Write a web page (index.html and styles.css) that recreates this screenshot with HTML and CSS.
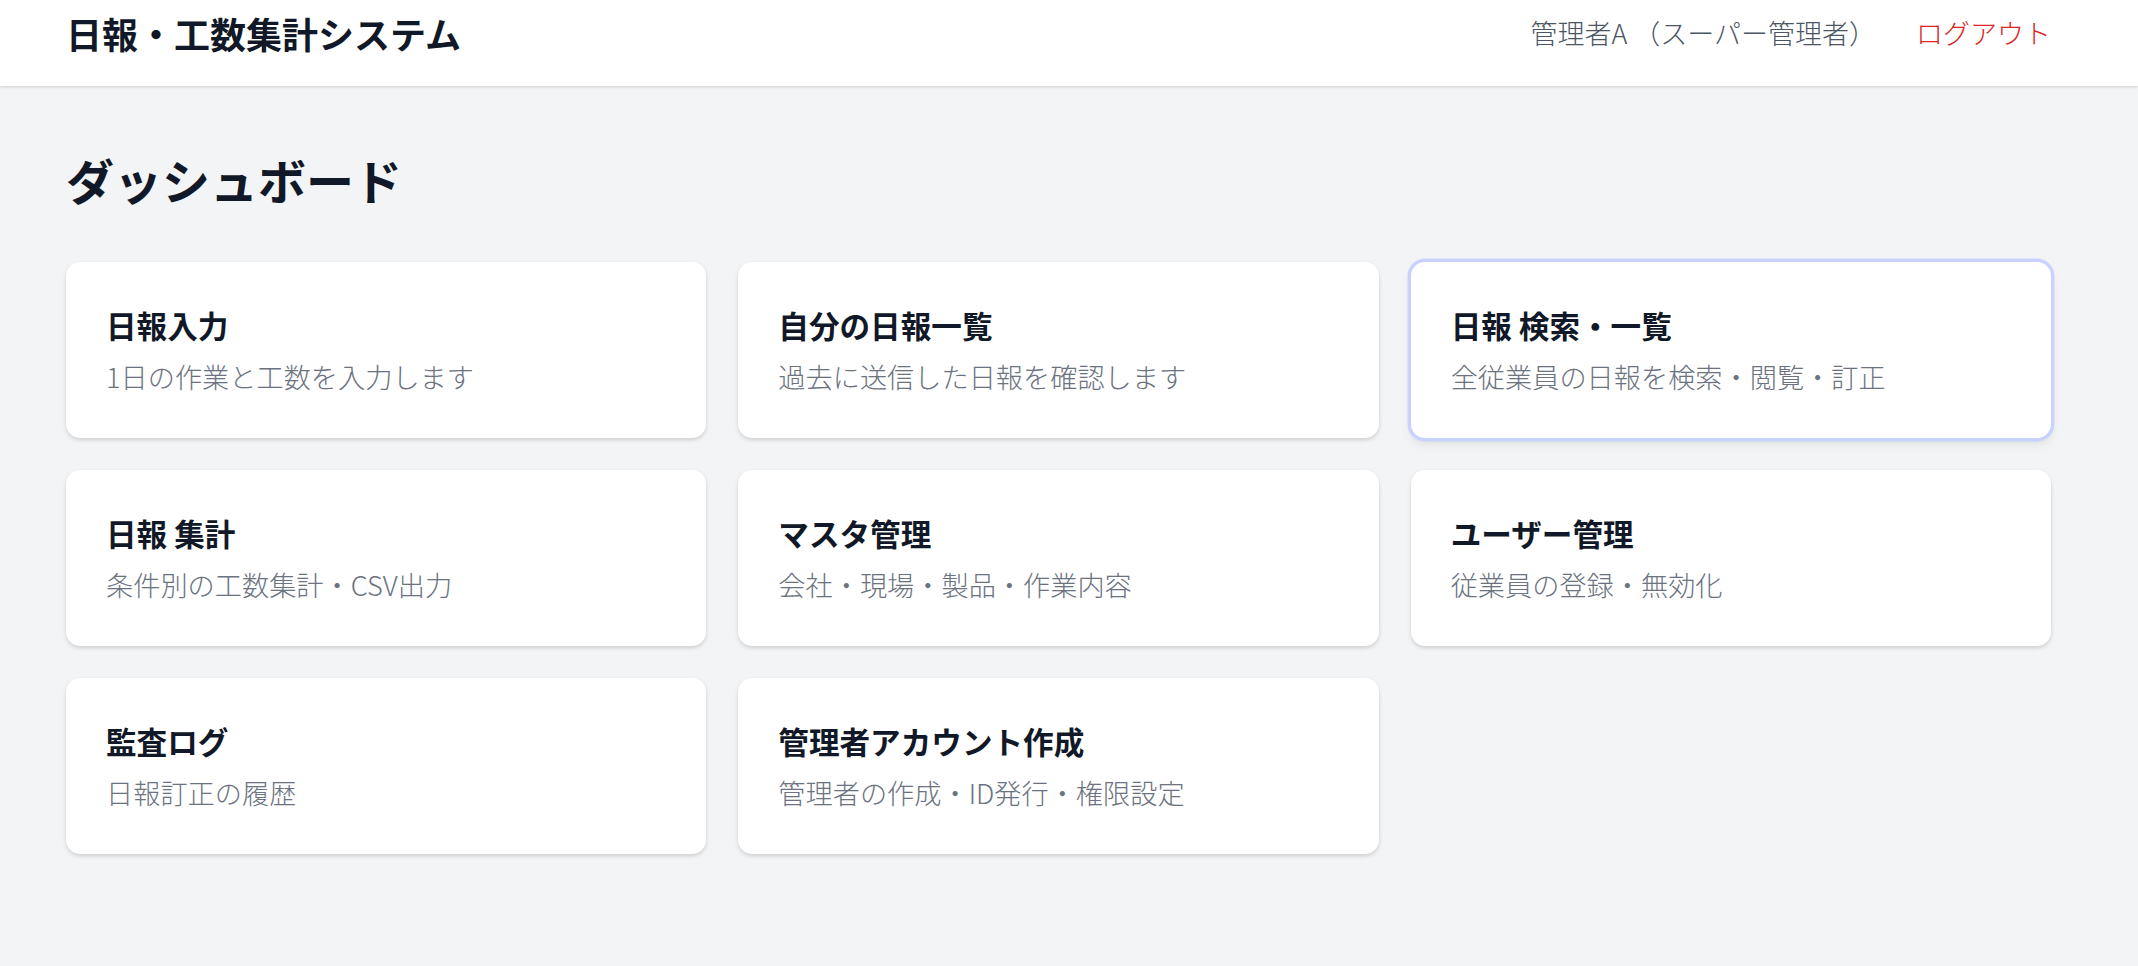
FILE: index.html
```html
<!DOCTYPE html>
<html lang="ja">
<head>
<meta charset="utf-8">
<title>日報・工数集計システム</title>
<link rel="stylesheet" href="styles.css">
</head>
<body>
<header class="topbar">
  <div class="topbar-inner">
    <div class="brand">日報・工数集計システム</div>
    <div class="userbox">
      <span class="username">管理者A （スーパー管理者）</span>
      <a class="logout" href="#">ログアウト</a>
    </div>
  </div>
</header>
<main class="page">
  <h1 class="page-title">ダッシュボード</h1>
  <div class="grid">
    <a class="card" href="#"><div class="card-title">日報入力</div><div class="card-desc">1日の作業と工数を入力します</div></a>
    <a class="card" href="#"><div class="card-title">自分の日報一覧</div><div class="card-desc">過去に送信した日報を確認します</div></a>
    <a class="card card-active" href="#"><div class="card-title">日報 検索・一覧</div><div class="card-desc">全従業員の日報を検索・閲覧・訂正</div></a>
    <a class="card" href="#"><div class="card-title">日報 集計</div><div class="card-desc">条件別の工数集計・CSV出力</div></a>
    <a class="card" href="#"><div class="card-title">マスタ管理</div><div class="card-desc">会社・現場・製品・作業内容</div></a>
    <a class="card" href="#"><div class="card-title">ユーザー管理</div><div class="card-desc">従業員の登録・無効化</div></a>
    <a class="card" href="#"><div class="card-title">監査ログ</div><div class="card-desc">日報訂正の履歴</div></a>
    <a class="card" href="#"><div class="card-title">管理者アカウント作成</div><div class="card-desc">管理者の作成・ID発行・権限設定</div></a>
  </div>
</main>
</body>
</html>
```

FILE: styles.css
```css
* { box-sizing: border-box; }
html, body {
  margin: 0;
  padding: 0;
}
body {
  background: #f3f4f6;
  font-family: "Noto Sans CJK JP", "Noto Sans", sans-serif;
  color: #111827;
  min-height: 966px;
}
.topbar {
  background: #ffffff;
  height: 86px;
  box-shadow: 0 1px 3px rgba(0,0,0,0.10), 0 1px 2px rgba(0,0,0,0.06);
}
.topbar-inner {
  width: 1985px;
  margin-left: 66px;
  height: 67px;
  display: flex;
  align-items: center;
  justify-content: space-between;
}
.brand {
  font-size: 36px;
  font-weight: 700;
  line-height: 1.3;
  color: #111827;
}
.userbox {
  display: flex;
  align-items: center;
  gap: 40px;
  font-size: 27px;
  line-height: 1.5;
  font-weight: 300;
}
.username { color: #4b5563; }
.logout {
  color: #dc2626;
  text-decoration: none;
}
.page {
  width: 1985px;
  margin-left: 66px;
  padding-top: 65px;
}
.page-title {
  margin: 0 0 53px 0;
  font-size: 48px;
  line-height: 1.2;
  font-weight: 700;
  color: #111827;
}
.grid {
  display: grid;
  grid-template-columns: repeat(3, 1fr);
  column-gap: 32px;
  row-gap: 32px;
}
.card {
  display: block;
  background: #ffffff;
  border-radius: 14px;
  padding: 40px;
  height: 176px;
  text-decoration: none;
  box-shadow: 0 2px 5px rgba(0,0,0,0.10), 0 2px 3px rgba(0,0,0,0.06);
}
.card-active {
  box-shadow: 0 0 0 3.4px #c7d2fe, 0 6px 12px rgba(0,0,0,0.08), 0 3px 6px rgba(0,0,0,0.05);
}
.card-title {
  font-size: 30.6px;
  line-height: 47.6px;
  font-weight: 700;
  color: #111827;
}
.card-desc {
  margin-top: 6.8px;
  font-size: 27.2px;
  line-height: 40.8px;
  font-weight: 300;
  color: #6b7280;
}
```
